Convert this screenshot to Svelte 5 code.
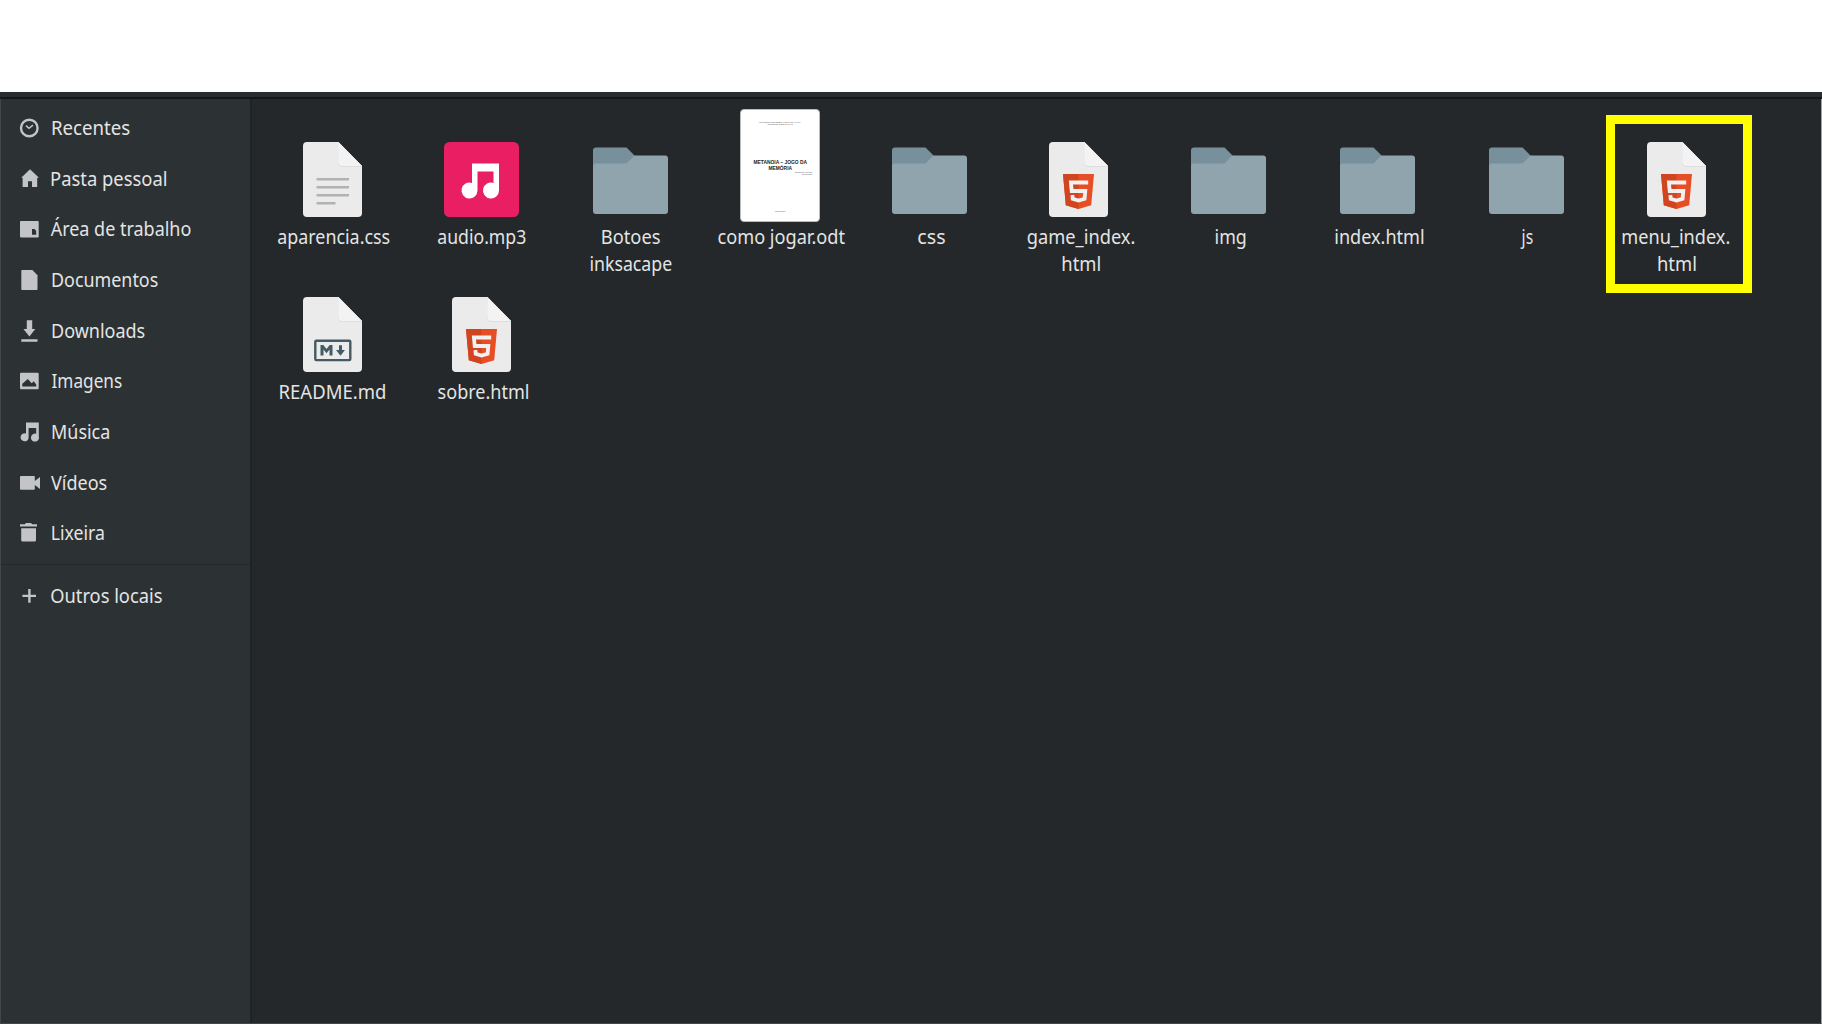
<script>
  const places = [
    { icon: 'recent', name: 'Recentes', w: 78 },
    { icon: 'home', name: 'Pasta pessoal', w: 115.5, dx: -1 },
    { icon: 'desktop', name: 'Área de trabalho', w: 140, dx: -1.3 },
    { icon: 'document', name: 'Documentos', w: 106 },
    { icon: 'download', name: 'Downloads', w: 93 },
    { icon: 'image', name: 'Imagens', w: 70.5, dx: -0.5 },
    { icon: 'music', name: 'Música', w: 57.5 },
    { icon: 'video', name: 'Vídeos', w: 56, dx: -1 },
    { icon: 'trash', name: 'Lixeira', w: 52.5, dx: -0.3 }
  ];
  const other = { icon: 'plus', name: 'Outros locais', w: 111, dx: -0.8 };

  const files = [
    { kind: 'text', lines: [['aparencia.css', 112.5, 333.7]] },
    { kind: 'audio', lines: [['audio.mp3', 88, 481]] },
    { kind: 'folder', lines: [['Botoes', 58.5, 631.2], ['inksacape', 81, 630.5]] },
    { kind: 'thumb', lines: [['como jogar.odt', 126.5, 781]] },
    { kind: 'folder', lines: [['css', 27, 931.3]] },
    { kind: 'html', lines: [['game_index.', 106.5, 1080.3], ['html', 38, 1081]] },
    { kind: 'folder', lines: [['img', 30.5, 1230.3]] },
    { kind: 'folder', lines: [['index.html', 88.5, 1379.5]] },
    { kind: 'folder', lines: [['js', 13, 1526]] },
    { kind: 'html', marked: true, lines: [['menu_index.', 107, 1675.7], ['html', 38, 1677]] },
    { kind: 'markdown', lines: [['README.md', 106, 332.3]] },
    { kind: 'html', lines: [['sobre.html', 91, 483.3]] }
  ];

  const pitch = 149.33;
  const nudge = (center, i) => center - (332 + pitch * (i % 10));

  // Condenses a label so that its inked width equals the given width.
  function fit(node, { w, dx = 0, centered = false }) {
    const ctx = document.createElement('canvas').getContext('2d');
    const s = getComputedStyle(node);
    ctx.font = `${s.fontSize} ${s.fontFamily}`;
    const m = ctx.measureText(node.textContent);
    const left = -m.actualBoundingBoxLeft;
    const ink = m.actualBoundingBoxRight + m.actualBoundingBoxLeft;
    const k = w / ink;
    const shift = centered ? dx - (left + ink / 2 - m.width / 2) * k : dx - left * k;
    node.style.transform = `translateX(${shift}px) scaleX(${k})`;
  }
</script>

{#snippet glyph(name)}
  <svg class="glyph" viewBox="0 0 22 22">
    {#if name === 'recent'}
      <circle cx="11.3" cy="11" r="8.3" fill="none" stroke="#c2c4c6" stroke-width="2.4" />
      <path d="M8 8.6 11 11.3 15 8.2" fill="none" stroke="#c2c4c6" stroke-width="1.6" />
    {:else if name === 'home'}
      <path d="M12 1.2 21 9.8H19.2V19H14V13.3H10V19H4.6V9.8H3.2z" />
    {:else if name === 'desktop'}
      <path fill-rule="evenodd" d="M2.8 3H20Q20.7 3 20.7 3.8V18.6Q20.7 19.4 20 19.4H2.8Q2 19.4 2 18.6V3.8Q2 3 2.8 3zM14 11V16.8H18.2V13L16.6 11z" />
    {:else if name === 'document'}
      <path d="M4.2 1H14.4L19.5 6.2V20.2Q19.5 21 18.7 21H4.2Q3.3 21 3.3 20.2V1.8Q3.3 1 4.2 1z" />
    {:else if name === 'download'}
      <path d="M8.8.3H14.2V9H17.3L11.4 16.5 5.4 9H8.8zM3.3 19.2H19.5V21.8H3.3z" />
    {:else if name === 'image'}
      <path fill-rule="evenodd" d="M3 2.8H19.8Q20.7 2.8 20.7 3.7V18.3Q20.7 19.2 19.800 19.2H3Q2 19.2 2 18.3V3.7Q2 2.8 3 2.8zM4.3 16.6H18.2V14.4L15.8 11.3 13.7 13.2 9.8 9 4.3 13.8z" />
    {:else if name === 'music'}
      <path d="M8 1.5H20.8V15.5A4 4 0 1 1 18.2 12.8V7.1H10.6V16A4 4 0 1 1 8 12.6z" />
    {:else if name === 'video'}
      <path d="M3 4H16Q16.8 4 16.8 5V9L22 5V17L16.8 13V17Q16.8 17.8 16 17.8H3Q2 17.8 2 17V5Q2 4 3 4z" />
    {:else if name === 'trash'}
      <path d="M8 .9H13L14.2 2.2H19V4.6H2V2.2H6.8zM3.2 6.3H18V18.3Q18 19.4 16.9 19.4H4.3Q3.2 19.4 3.2 18.3z" />
    {:else}
      <path d="M10.2 4H12.600V9.700H18V12.100H12.600V17.800H10.200V12.100H4.400V9.700H10.200z" />
    {/if}
  </svg>
{/snippet}

{#snippet paper()}
  <path d="M4 0H35.5L59 24V71Q59 75 55 75H4Q0 75 0 71V4Q0 0 4 0z" fill="#ebebeb" />
  <path d="M35 0V21Q35 25 39 25H59V24z" fill="#dedede" />
  <path d="M35.3 0V20Q35.3 24 39.3 24H59z" fill="#f3f3f3" />
{/snippet}

{#snippet place(p)}
  <a class="place" href="#{p.icon}">
    {@render glyph(p.icon)}
    <span class="label" use:fit={{ w: p.w, dx: p.dx }}>{p.name}</span>
  </a>
{/snippet}

<div class="page">
  <div class="blank"></div>
  <div class="toolbar-edge"></div>
  <main>
    <nav>
      {#each places as p}{@render place(p)}{/each}
      <hr />
      {@render place(other)}
    </nav>
    <section>
      {#each files as f, i}
        <div class="file">
          <div class="slot" class:tall={f.kind === 'thumb'}>
            {#if f.kind === 'folder'}
              <svg width="75" height="75" viewBox="0 0 75 75">
                <path d="M3 5.5H33.5L41.5 13.5V30H0V8.5Q0 5.5 3 5.5z" fill="#78909c" />
                <path d="M41.5 13.5H72Q75 13.5 75 16.5V69Q75 72 72 72H3Q0 72 0 69V24.5Q0 21.5 3 21.5H33.5z" fill="#90a4ae" />
              </svg>
            {:else if f.kind === 'audio'}
              <svg width="75" height="75" viewBox="0 0 75 75">
                <rect width="75" height="75" rx="5.5" fill="#e91e63" />
                <path d="M28 21.5H55V48.5A8 8 0 1 1 49.5 40.9V29.5H33.5V48.5A8 8 0 1 1 28 40.9z" fill="#fff" />
              </svg>
            {:else if f.kind === 'thumb'}
              <div class="thumb">
                <p class="head">UNIVERSIDADE FEDERAL DE SANTA MARIA<br />CURSO DE COMPUTAÇÃO</p>
                <p class="title">METANOIA – JOGO DA<br />MEMÓRIA</p>
                <p class="credit">Documento do jogo<br />da memória</p>
                <p class="foot">Março 2017</p>
              </div>
            {:else}
              <svg width="59" height="75" viewBox="0 0 59 75">
                {@render paper()}
                {#if f.kind === 'text'}
                  <path d="M13.5 37.3H46M13.5 45.3H46M13.5 53.3H46M13.5 61.3H32.5" stroke="#b2b2b2" stroke-width="2.6" />
                {:else if f.kind === 'html'}
                  <path d="M14 32H45L42.2 63.3 29.5 67 16.8 63.3z" fill="#e84e26" />
                  <path d="M14 32H29.5V67L16.8 63.3z" fill="#d0441f" />
                  <path d="M39.2 40.5H21.9L22.7 49H36.3L35.6 56.7 29.5 58.5 23.7 56.7 23.4 53" fill="none" stroke="#f1f1f1" stroke-width="3.8" />
                {:else}
                  <rect x="12.3" y="43.8" width="35" height="19.3" rx="1" fill="none" stroke="#455a64" stroke-width="2.4" />
                  <path d="M17.5 58.5V48H20.3L23.5 52 26.7 48H29.5V58.5H26.5V52.5L23.5 56.2 20.5 52.5V58.5zM36 48.3H39V53H42L37.5 58.8 33 53H36z" fill="#455a64" />
                {/if}
              </svg>
            {/if}
          </div>
          {#each f.lines as [text, w, center]}
            <div class="line"><span class="label" use:fit={{ w, dx: nudge(center, i), centered: true }}>{text}</span></div>
          {/each}
          {#if f.marked}<div class="mark"></div>{/if}
        </div>
      {/each}
    </section>
  </main>
</div>

<style>
  :global(body) { overflow: hidden; background: #fff; }
  .page {
    width: 100vw; height: 100vh; box-sizing: border-box;
    display: flex; flex-direction: column;
    font-family: 'Noto Sans', 'Open Sans', sans-serif;
    font-size: 19.3px; color: #e3e4e4;
  }
  .blank { height: 92px; flex: none; background: #fff; }
  .toolbar-edge { height: 5px; flex: none; background: #292d30; border-bottom: 2px solid #151819; }
  main {
    flex: 1; min-height: 0; display: flex; box-sizing: border-box;
    background: #24282a; border: 1px solid #414648; border-top: 0; border-right-color: #a0a3a3;
  }
  nav {
    width: 251px; flex: none; box-sizing: border-box; padding-top: 3.7px;
    background: #2c3133; border-right: 2px solid #1f2325;
  }
  .place {
    display: flex; align-items: center; gap: 10px;
    height: 50.67px; padding-left: 17px; color: inherit; text-decoration: none;
  }
  .place .label { margin-left: 1.5px; line-height: 26px; transform-origin: left center; }
  .glyph { width: 22px; height: 22px; flex: none; fill: #c2c4c6; }
  hr { border: 0; height: 1px; margin: 5px 0 6px; background: #24292b; }
  section {
    flex: 1; padding: 44px 0 0 5.6px;
    display: grid; grid-template-columns: repeat(10, 149.33px);
    grid-auto-rows: 155px; align-content: start;
  }
  .file { position: relative; }
  .slot { height: 81px; box-sizing: border-box; padding-bottom: 6.7px; display: flex; justify-content: center; align-items: flex-end; }
  .slot.tall { padding-bottom: 1.7px; }
  .slot svg { flex: none; display: block; }
  .line { height: 26.67px; line-height: 26.67px; display: flex; justify-content: center; }
  .label { white-space: nowrap; display: block; }
  .thumb {
    width: 80px; height: 113px; flex: none; box-sizing: border-box; padding: 11px 7px 0;
    background: #fff; border: 1px solid #b9bcb9; border-radius: 4px; color: #222;
    font-family: 'Liberation Sans', Arial, sans-serif; text-align: center;
  }
  .thumb p { margin: 0; white-space: nowrap; }
  .head { font-size: 2px; line-height: 2px; color: #555; height: 39px; }
  .title { font-size: 4.9px; line-height: 5.6px; font-weight: bold; height: 11px; }
  .credit { font-size: 2px; line-height: 2px; text-align: right; color: #555; height: 39px; }
  .foot { font-size: 2px; line-height: 2px; color: #555; }
  .mark {
    position: absolute; left: 4.4px; top: -28.4px; width: 146px; height: 178px;
    box-sizing: border-box; border: 9px solid #ff0;
  }
</style>
